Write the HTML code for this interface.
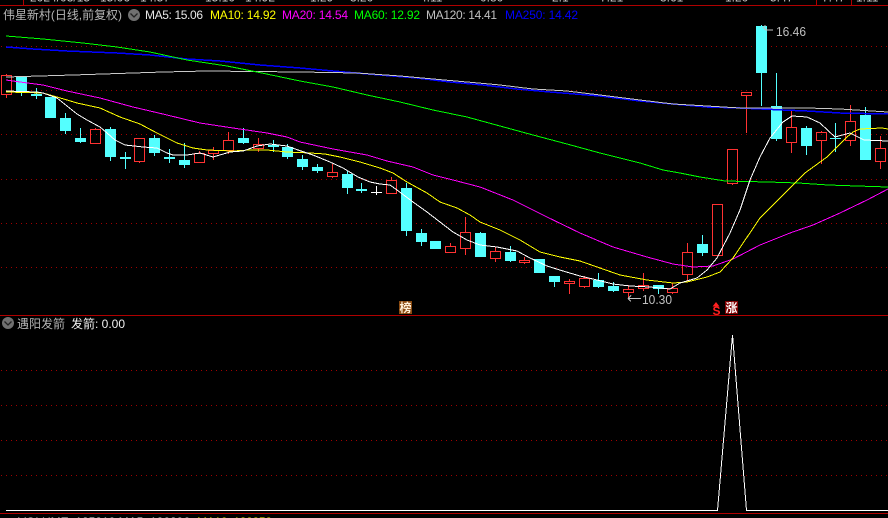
<!DOCTYPE html>
<html><head><meta charset="utf-8"><style>
html,body{margin:0;padding:0;background:#000;width:888px;height:518px;overflow:hidden}
svg{display:block;position:absolute;left:0;top:0}
text{font-family:"Liberation Sans","WenQuanYi Zen Hei","Noto Sans CJK SC",sans-serif;font-size:12px}
.l{fill:none;stroke-width:1;shape-rendering:crispEdges}
.m{fill:none;stroke-width:1;shape-rendering:crispEdges}
</style></head><body>
<svg width="888" height="518" viewBox="0 0 888 518" xmlns="http://www.w3.org/2000/svg">
<rect width="888" height="518" fill="#000"/>
<!-- clipped top text -->
<g fill="#c8c8c8">
<text x="30" y="1.5">2024/03/15</text><text x="100" y="1.5">15.06</text><text x="140" y="1.5">14.57</text><text x="205" y="1.5">15.10</text><text x="245" y="1.5">14.92</text><text x="310" y="1.5">1.29</text><text x="350" y="1.5">3.20</text><text x="420" y="1.5">4.11</text><text x="480" y="1.5">0.80</text><text x="552" y="1.5">2.1</text><text x="600" y="1.5">7.21</text><text x="660" y="1.5">3.61</text><text x="725" y="1.5">1.20</text><text x="770" y="1.5">5.47</text><text x="822" y="1.5">7.47</text><text x="856" y="1.5">1.11</text>
</g>
<!-- frame lines -->
<g stroke="#b00000" stroke-width="1" shape-rendering="crispEdges" fill="none">
<path d="M0 5.5H888M23.5 0V5M816.5 0V5M851.5 0V5M0 315.5H888M0 513.5H888"/>
</g>
<!-- grid -->
<g stroke="#a00000" stroke-width="1" stroke-dasharray="1 4" shape-rendering="crispEdges">
<path d="M1 46.5H888M1 90.5H888M1 134.5H888M1 179.5H888M1 223.5H888M1 267.5H888M1 370.5H888M1 405.5H888M1 440.5H888M1 475.5H888"/>
</g>
<!-- cyan candles -->
<g fill="#54ffff" shape-rendering="crispEdges">
<rect x="16" y="76" width="11" height="16"/><rect x="31" y="94" width="11" height="2"/><rect x="45" y="97" width="11" height="21"/><rect x="60" y="118" width="11" height="13"/><rect x="75" y="138" width="11" height="4"/><rect x="105" y="129" width="11" height="28"/><rect x="120" y="157" width="11" height="2"/><rect x="149" y="138" width="11" height="15"/><rect x="164" y="157" width="11" height="2"/><rect x="179" y="160" width="11" height="5"/><rect x="238" y="138" width="11" height="5"/><rect x="268" y="145" width="11" height="2"/><rect x="282" y="147" width="11" height="10"/><rect x="297" y="159" width="11" height="8"/><rect x="312" y="167" width="11" height="4"/><rect x="342" y="174" width="11" height="14"/><rect x="356" y="189" width="11" height="2"/><rect x="401" y="188" width="11" height="43"/><rect x="416" y="233" width="11" height="9"/><rect x="430" y="241" width="11" height="8"/><rect x="475" y="233" width="11" height="24"/><rect x="505" y="252" width="11" height="9"/><rect x="534" y="259" width="11" height="14"/><rect x="549" y="276" width="11" height="6"/><rect x="593" y="280" width="11" height="7"/><rect x="608" y="286" width="11" height="5"/><rect x="653" y="285" width="11" height="4"/><rect x="697" y="244" width="11" height="9"/><rect x="756" y="26" width="11" height="47"/><rect x="771" y="106" width="11" height="33"/><rect x="801" y="128" width="11" height="18"/><rect x="830" y="138" width="11" height="1"/><rect x="860" y="115" width="11" height="45"/>
</g>
<path class="l" stroke="#54ffff" d="M21.5 92V96M36.5 88V99M65.5 113V134M80.5 128V143M110.5 127V161M125.5 152V169M154.5 135V156M169.5 149V163M184.5 143V168M243.5 128V144M273.5 140V152M287.5 144V159M302.5 155V170M317.5 164V173M347.5 171V194M361.5 183V193M406.5 183V236M421.5 229V246M480.5 232V234M510.5 246V262M554.5 282V287M598.5 273V288M613.5 282V292M658.5 289V294M702.5 235V256M761.5 25V106M776.5 73V141M806.5 126V155M835.5 123V152M865.5 107V115"/>
<path class="l" stroke="#fff" d="M371 192.5H382M376.5 186V195"/>
<!-- red candles -->
<path class="l" stroke="#ff3232" d="M1.5 75.5H11.5V94.5H1.5ZM6.5 74V75M6.5 95V98
M90.5 129.5H100.5V143.5H90.5ZM95.5 128V129
M134.5 138.5H144.5V161.5H134.5ZM139.5 162V163
M194.5 153.5H204.5V162.5H194.5ZM199.5 151V153
M208.5 150.5H218.5V153.5H208.5ZM213.5 147V150M213.5 154V160
M223.5 140.5H233.5V150.5H223.5ZM228.5 132V140M228.5 151V154
M253.5 144.5H263.5V148.5H253.5ZM258.5 138V144M258.5 149V152
M327.5 172.5H337.5V176.5H327.5ZM332.5 164V172M332.5 177V178
M386.5 180.5H396.5V193.5H386.5ZM391.5 177V180
M445.5 246.5H455.5V252.5H445.5ZM450.5 243V246
M460.5 232.5H470.5V248.5H460.5ZM465.5 217V232M465.5 249V255
M490.5 251.5H500.5V258.5H490.5ZM495.5 247V251M495.5 259V262
M519.5 260.5H529.5V262.5H519.5ZM524.5 257V260M524.5 263V264
M564.5 281.5H574.5V283.5H564.5ZM569.5 279V281M569.5 284V294
M579.5 278.5H589.5V286.5H579.5ZM584.5 276V278M584.5 287V288
M623.5 289.5H633.5V292.5H623.5ZM628.5 285V289M628.5 293V298
M638.5 285.5H648.5V288.5H638.5ZM643.5 273V285M643.5 289V291
M667.5 288.5H677.5V292.5H667.5ZM672.5 283V288M672.5 293V294
M682.5 252.5H692.5V274.5H682.5ZM687.5 243V252M687.5 275V281
M712.5 204.5H722.5V255.5H712.5Z
M727.5 149.5H737.5V183.5H727.5ZM732.5 184V185
M741.5 92.5H751.5V95.5H741.5ZM746.5 96V133
M786.5 127.5H796.5V142.5H786.5ZM791.5 111V127M791.5 143V153
M816.5 132.5H826.5V140.5H816.5ZM821.5 131V132M821.5 141V164
M845.5 121.5H855.5V140.5H845.5ZM850.5 105V121M850.5 141V146
M875.5 148.5H885.5V161.5H875.5ZM880.5 136V148M880.5 162V169"/>
<!-- MA250 blue -->
<polyline class="m" stroke="#0000ff" style="stroke-width:1.5" points="6,47 33,49 67,51 117,53 150,55 187,59 220,61 260,65 300,68 333,71 380,75 417,78 450,82 483,85 517,89 550,92 600,96 640,101 673,104 707,107 740,108 783,110 807,111 840,113 888,114"/>
<!-- MA120 grey -->
<polyline class="m" stroke="#c8c8c8" points="6,77 73,75 133,73 163,72 207,71 300,72 357,73 400,76 433,79 467,82 500,85 533,89 567,91 600,95 640,100 673,104 707,106 740,108 807,108 840,109 888,112"/>
<!-- MA60 green -->
<polyline class="m" stroke="#00ff00" points="6,36 43,39 83,43 117,47 150,52 187,60 227,66 257,72 300,81 333,87 367,95 400,102 433,110 467,117 500,126 533,135 567,144 600,153 640,163 663,170 680,173 700,177 725,181 768,182 798,183 828,185 857,186 888,187"/>
<!-- MA20 magenta -->
<polyline class="m" stroke="#ff00ff" points="6,80 20,82 43,85 67,91 100,98 133,107 167,115 200,123 233,128 267,133 287,137 300,142 333,149 367,155 387,161 413,167 433,175 453,180 480,187 513,200 547,217 580,233 613,247 647,257 673,264 693,267 713,266 733,259 760,245 790,233 813,225 840,213 867,200 888,189"/>
<!-- MA10 yellow -->
<polyline class="m" stroke="#ffff00" points="6,92 43,93 57,97 77,103 100,108 120,117 140,124 157,133 177,143 193,148 207,150 233,151 250,150 267,150 287,152 310,153 325,154 340,157 360,162 380,168 393,173 407,182 427,193 440,202 457,208 470,215 480,222 500,230 520,240 540,252 560,257 580,261 600,268 620,275 647,280 673,283 687,282 707,277 720,272 733,258 760,218 783,195 805,173 827,157 847,137 853,132 860,129 882,128 888,129"/>
<!-- MA5 white -->
<polyline class="m" stroke="#ffffff" points="6,91 37,92 43,93 57,98 67,106 77,114 87,120 100,127 107,133 115,140 125,145 143,147 157,148 167,153 173,155 187,155 200,153 213,157 230,152 243,151 257,146 270,144 287,146 298,150 313,155 330,162 343,168 358,177 370,182 380,184 390,185 397,190 413,202 427,212 440,222 453,232 467,240 480,245 497,247 517,251 530,258 547,266 563,271 580,276 597,280 613,284 630,286 650,287 670,289 680,283 697,278 707,270 717,258 730,233 740,210 750,180 760,157 770,138 783,122 792,116 807,117 820,123 835,137 850,133 864,140 888,141"/>
<!-- legend -->
<text x="3" y="19" fill="#b4b4b4" textLength="119" lengthAdjust="spacingAndGlyphs">伟星新村(日线,前复权)</text>
<circle cx="134" cy="15" r="6" fill="#707070"/><path d="M130.5 13.5L134 17L137.5 13.5" fill="none" stroke="#222" stroke-width="1.3"/>
<text x="145" y="19" fill="#e8e8e8" textLength="58">MA5: 15.06</text>
<text x="210" y="19" fill="#ffff00" textLength="66">MA10: 14.92</text>
<text x="282" y="19" fill="#ff00ff" textLength="66">MA20: 14.54</text>
<text x="354" y="19" fill="#00ff00" textLength="66">MA60: 12.92</text>
<text x="426" y="19" fill="#c0c0c0" textLength="71">MA120: 14.41</text>
<text x="505" y="19" fill="#0000ff" textLength="73">MA250: 14.42</text>
<!-- price labels -->
<path d="M763 27L766 30H773M764 26H766" fill="none" stroke="#c0c0c0" stroke-width="1" shape-rendering="crispEdges"/>
<text x="776" y="36" fill="#c0c0c0" textLength="30" lengthAdjust="spacingAndGlyphs" style="font-size:13px">16.46</text>
<path d="M628 298.5H641M628 298.5L631 295.5M628 298.5L631 301.5" fill="none" stroke="#c0c0c0" stroke-width="1" shape-rendering="crispEdges"/>
<text x="642" y="304" fill="#c0c0c0" textLength="30" lengthAdjust="spacingAndGlyphs" style="font-size:13px">10.30</text>
<!-- tags -->
<rect x="399" y="301" width="13" height="13" fill="#8a4a10"/>
<text x="399.5" y="312" fill="#fff0d8" style="font-size:12px;font-weight:bold">榜</text>
<path d="M716 302L719.5 306.5H712.5Z" fill="#ff2020"/>
<text x="712.5" y="315" fill="#ff2020" style="font-size:12px;font-weight:bold">S</text>
<rect x="725" y="301" width="13" height="13" fill="#800000"/>
<text x="725.5" y="312" fill="#ffffff" style="font-size:12px;font-weight:bold">涨</text>
<!-- lower legend -->
<circle cx="8" cy="323" r="6" fill="#707070"/><path d="M4.5 321.5L8 325L11.5 321.5" fill="none" stroke="#222" stroke-width="1.3"/>
<text x="17" y="328" fill="#b4b4b4" textLength="48" lengthAdjust="spacingAndGlyphs">遇阳发箭</text>
<text x="71" y="328" fill="#f0f0f0" textLength="54">发箭: 0.00</text>
<!-- lower signal -->
<polyline class="m" stroke="#fff" points="6,510.5 717.5,510.5 732.5,335 746.5,510.5 888,510.5"/>
<!-- clipped bottom legend -->
<circle cx="8" cy="524" r="6" fill="#707070"/>
<text x="18" y="526" fill="#f0f0f0" textLength="172">VOLUME: 185210 MA5: 186896</text>
<text x="197" y="526" fill="#ffff00" textLength="75">MA10: 188858</text>
</svg>
</body></html>
